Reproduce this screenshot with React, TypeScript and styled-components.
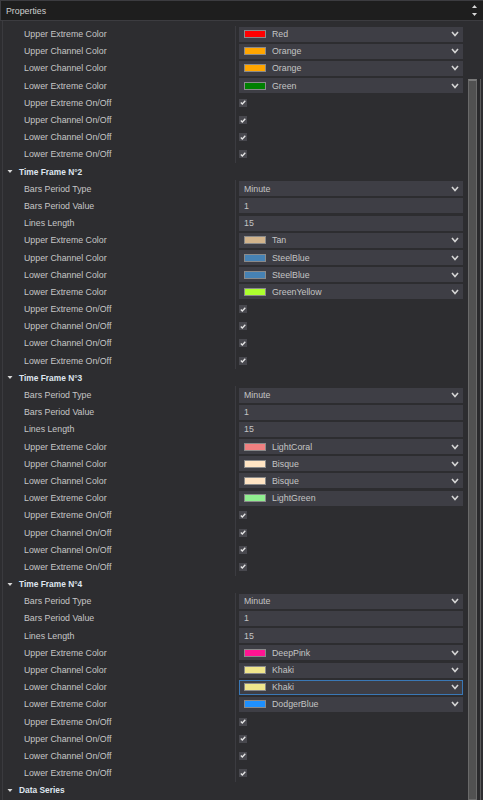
import React from "react";
import styled, { createGlobalStyle } from "styled-components";

const ROW_H = 17.2;

const GlobalStyle = createGlobalStyle`
  html, body { margin: 0; padding: 0; background: #2d2d30; }
  body { font-family: "Liberation Sans", Arial, sans-serif; }
`;

const Frame = styled.div`
  width: 483px;
  height: 800px;
  overflow: hidden;
  display: flex;
  flex-direction: column;
  background: #2d2d30;
`;

const HeaderBar = styled.div`
  height: 21px;
  display: flex;
  flex-shrink: 0;
  background: #1e1e1e;
  border-top: 1px solid #3c3c40;
  border-bottom: 1px solid #3c3c40;
  box-sizing: border-box;
`;

const HeaderField = styled.div`
  flex: 1;
  display: flex;
  align-items: center;
  padding-left: 5px;
  border-left: 1px solid #3c3c40;
  color: #d0d0d0;
  font-size: 8.8px;
`;

const Spin = styled.div`
  width: 15px;
  display: flex;
  flex-direction: column;
  align-items: center;
  justify-content: center;
  gap: 5px;
  padding-right: 2px;
  box-sizing: border-box;
`;

const Body = styled.div`
  flex: 1;
  display: flex;
  min-height: 0;
`;

const List = styled.div`
  flex: 1;
  padding-top: 4.5px;
  border-left: 1px solid #3a3a3e;
  margin-left: 2px;
`;

const ScrollTrack = styled.div`
  width: 15px;
  display: flex;
  padding-top: 58px;
  box-sizing: border-box;
`;

const Thumb = styled.div`
  width: 9px;
  box-sizing: border-box;
  border: 1px solid #6a6a6a;
  border-top: 2px solid #7a7a7a;
  background: #515151;
`;

const ThumbGap = styled.div`
  width: 3px;
  background: #2a2a2c;
`;

const TrackEdge = styled.div`
  width: 1px;
  background: #5a5a5a;
`;

const Row = styled.div`
  height: ${ROW_H}px;
  display: grid;
  grid-template-columns: 232px 1fr;
`;

const Label = styled.div`
  display: flex;
  align-items: center;
  padding-left: 21px;
  color: #c6c6c6;
  font-size: 8.8px;
  white-space: nowrap;
`;

const ValueCell = styled.div`
  border-left: 1px solid #3b3b40;
  display: flex;
  align-items: center;
  padding: 0 5px 0 3px;
`;

const Field = styled.div<{ $selected?: boolean }>`
  flex: 1;
  height: 15px;
  box-sizing: border-box;
  display: flex;
  align-items: center;
  padding: 0 3px 0 4px;
  background: #3e3e45;
  border: 1px solid ${(p) => (p.$selected ? "#3a78b6" : "#3e3e45")};
  color: #c4c4c4;
  font-size: 8.8px;
`;

const FieldText = styled.span`
  flex: 1;
  white-space: nowrap;
`;

const Swatch = styled.span<{ $color: string }>`
  width: 22px;
  height: 8px;
  box-sizing: border-box;
  margin-right: 6px;
  background: ${(p) => p.$color};
  border: 1px solid #8a8a8a;
  flex-shrink: 0;
`;

const CheckBox = styled.span`
  width: 8px;
  height: 8px;
  background: #48484e;
  display: flex;
  align-items: center;
  justify-content: center;
`;

const SectionRow = styled.div`
  height: ${ROW_H}px;
  display: flex;
  align-items: center;
  padding-left: 4px;
  gap: 6px;
  color: #dfe5ef;
  font-size: 8.4px;
  font-weight: 700;
`;

const Chevron = () => (
  <svg width="8" height="6" viewBox="0 0 8 6">
    <polyline points="1,1 4,4.5 7,1" fill="none" stroke="#d4d4d4" strokeWidth="1.6" />
  </svg>
);

const Tri = ({ up, color = "#d8d8d8", w = 5 }: { up?: boolean; color?: string; w?: number }) => (
  <svg width={w} height="3" viewBox="0 0 5 3">
    <polygon points={up ? "0,3 5,3 2.5,0" : "0,0 5,0 2.5,3"} fill={color} />
  </svg>
);

const Check = () => (
  <svg width="6" height="5" viewBox="0 0 6 5">
    <polyline points="0.8,2.6 2.3,4 5.3,0.8" fill="none" stroke="#e6e6e6" strokeWidth="1.3" />
  </svg>
);

type Item =
  | { kind: "color"; label: string; name: string; color: string; selected?: boolean }
  | { kind: "select"; label: string; value: string }
  | { kind: "text"; label: string; value: string }
  | { kind: "check"; label: string };

const checks: Item[] = [
  { kind: "check", label: "Upper Extreme On/Off" },
  { kind: "check", label: "Upper Channel On/Off" },
  { kind: "check", label: "Lower Channel On/Off" },
  { kind: "check", label: "Lower Extreme On/Off" },
];

const head = (): Item[] => [
  { kind: "select", label: "Bars Period Type", value: "Minute" },
  { kind: "text", label: "Bars Period Value", value: "1" },
  { kind: "text", label: "Lines Length", value: "15" },
];

const colors = (
  a: [string, string],
  b: [string, string],
  c: [string, string],
  d: [string, string],
  selIdx = -1
): Item[] =>
  [
    ["Upper Extreme Color", a],
    ["Upper Channel Color", b],
    ["Lower Channel Color", c],
    ["Lower Extreme Color", d],
  ].map(([label, v], i) => ({
    kind: "color" as const,
    label: label as string,
    name: (v as [string, string])[0],
    color: (v as [string, string])[1],
    selected: i === selIdx,
  }));

const sections: { title?: string; items: Item[] }[] = [
  {
    items: [
      ...colors(["Red", "#ff0000"], ["Orange", "#ffa500"], ["Orange", "#ffa500"], ["Green", "#008000"]),
      ...checks,
    ],
  },
  {
    title: "Time Frame N°2",
    items: [
      ...head(),
      ...colors(["Tan", "#d2b48c"], ["SteelBlue", "#4682b4"], ["SteelBlue", "#4682b4"], ["GreenYellow", "#adff2f"]),
      ...checks,
    ],
  },
  {
    title: "Time Frame N°3",
    items: [
      ...head(),
      ...colors(["LightCoral", "#f08080"], ["Bisque", "#ffe4c4"], ["Bisque", "#ffe4c4"], ["LightGreen", "#90ee90"]),
      ...checks,
    ],
  },
  {
    title: "Time Frame N°4",
    items: [
      ...head(),
      ...colors(["DeepPink", "#ff1493"], ["Khaki", "#f0e68c"], ["Khaki", "#f0e68c"], ["DodgerBlue", "#1e90ff"], 2),
      ...checks,
    ],
  },
  { title: "Data Series", items: [] },
];

const renderValue = (it: Item) => {
  switch (it.kind) {
    case "color":
      return (
        <Field $selected={it.selected}>
          <Swatch $color={it.color} />
          <FieldText>{it.name}</FieldText>
          <Chevron />
        </Field>
      );
    case "select":
      return (
        <Field>
          <FieldText>{it.value}</FieldText>
          <Chevron />
        </Field>
      );
    case "text":
      return (
        <Field>
          <FieldText>{it.value}</FieldText>
        </Field>
      );
    case "check":
      return (
        <CheckBox>
          <Check />
        </CheckBox>
      );
  }
};

export default function App() {
  return (
    <>
      <GlobalStyle />
      <Frame>
        <HeaderBar>
          <HeaderField>Properties</HeaderField>
          <Spin>
            <Tri up />
            <Tri />
          </Spin>
        </HeaderBar>
        <Body>
          <List>
            {sections.map((s, si) => (
              <div key={si}>
                {s.title && (
                  <SectionRow>
                    <Tri color="#d8d8d8" w={6} />
                    <span>{s.title}</span>
                  </SectionRow>
                )}
                {s.items.map((it, i) => (
                  <Row key={i}>
                    <Label>{it.label}</Label>
                    <ValueCell>{renderValue(it)}</ValueCell>
                  </Row>
                ))}
              </div>
            ))}
          </List>
          <ScrollTrack>
            <Thumb />
            <ThumbGap />
            <TrackEdge />
          </ScrollTrack>
        </Body>
      </Frame>
    </>
  );
}
